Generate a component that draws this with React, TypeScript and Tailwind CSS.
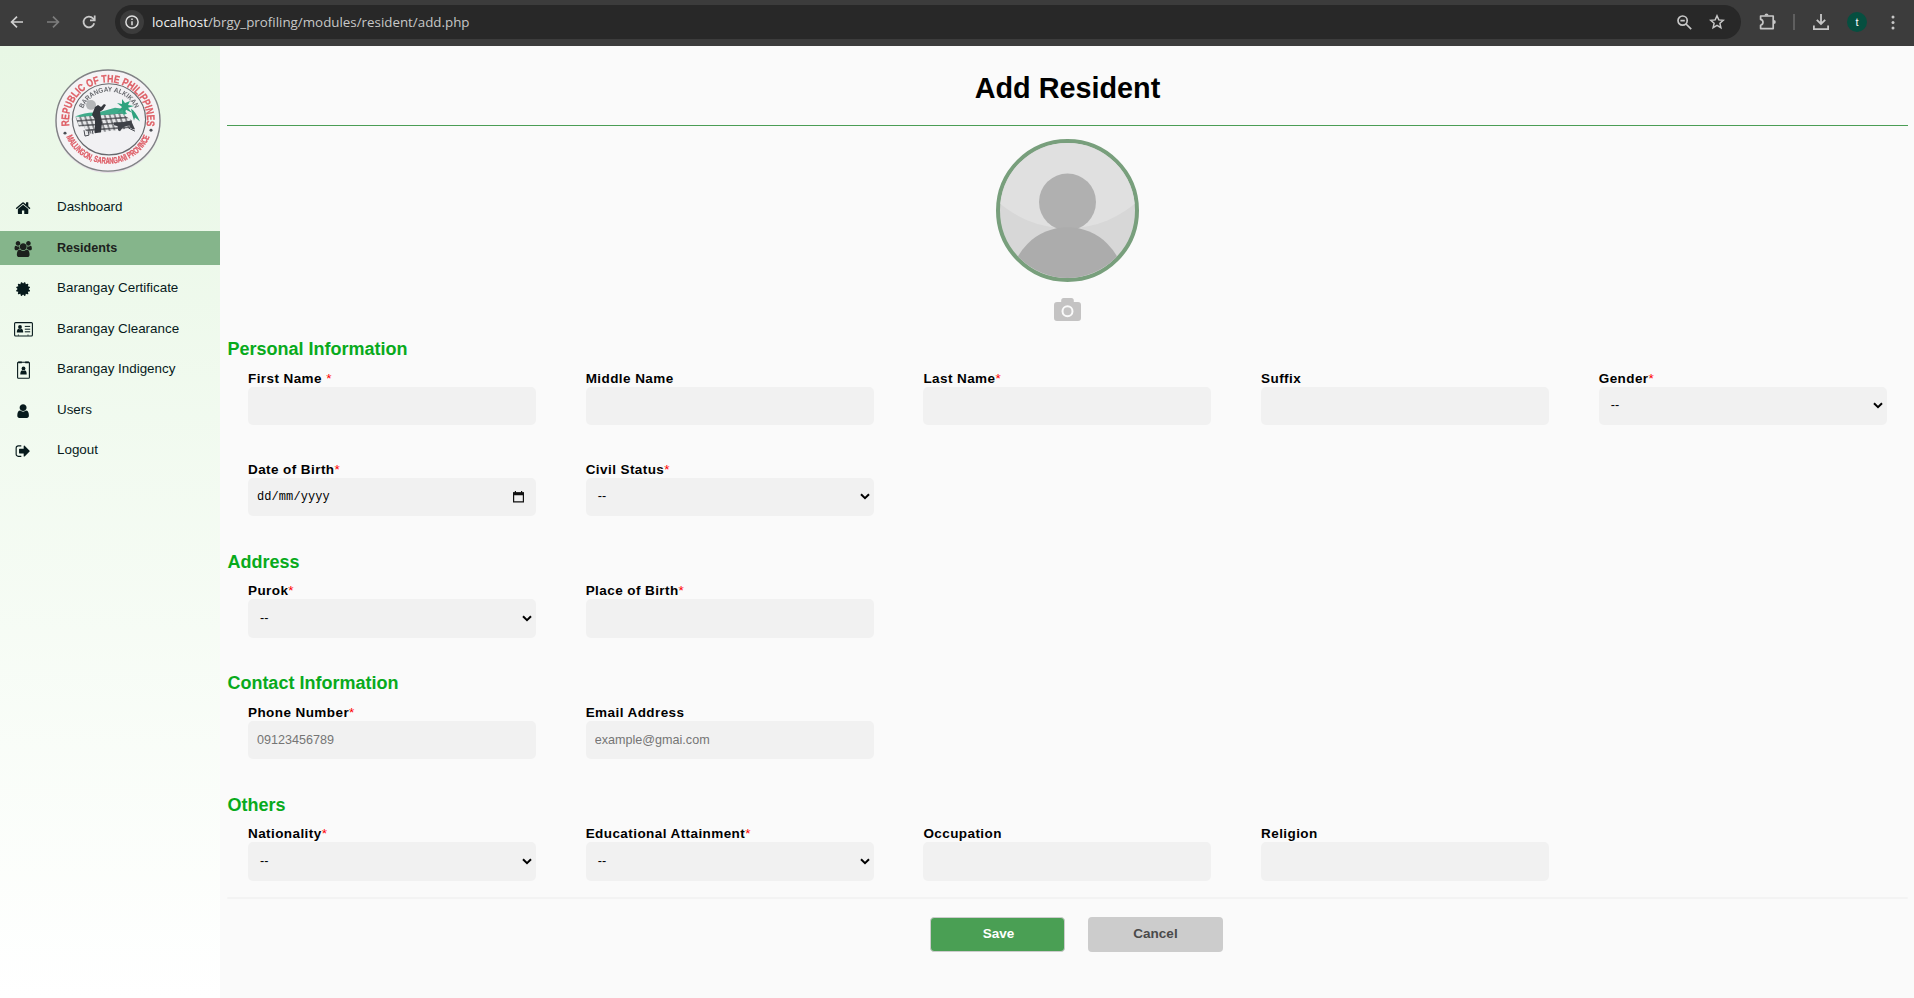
import React from "react";

type IconProps = { d: string; box?: string; w?: number };

const Glyph = ({ d, box = "0 0 1792 1792", w = 16.2 }: IconProps) => (
  <svg viewBox={box} width={w} height={16.2} fill="currentColor">
    <path d={d} />
  </svg>
);

const HOME =
  "M1472 992v480q0 26-19 45t-45 19h-384v-384h-256v384h-384q-26 0-45-19t-19-45v-480q0-1 .5-3t.5-3l575-474 575 474q1 2 1 6zm223-69l-62 74q-8 9-21 11h-3q-13 0-21-7l-692-577-692 577q-12 8-24 7-13-2-21-11l-62-74q-8-10-7-23.5t11-21.5l719-599q32-26 76-26t76 26l244 204v-195q0-14 9-23t23-9h192q14 0 23 9t9 23v408l219 182q10 8 11 21.5t-7 23.5z";
const USERS =
  "M529 896q-162 5-265 128h-134q-82 0-138-40.5t-56-118.5q0-353 124-353 6 0 43.5 21t97.5 42.5 119 21.5q67 0 133-23-5 37-5 66 0 139 81 256zm1071 637q0 120-73 189.5t-194 69.5h-874q-121 0-194-69.5t-73-189.5q0-53 3.5-103.5t14-109 26.5-108.5 43-97.5 62-81 85.5-53.5 111.5-20q10 0 43 21.5t73 48 107 48 135 21.5 135-21.5 107-48 73-48 43-21.5q61 0 111.5 20t85.5 53.5 62 81 43 97.5 26.5 108.5 14 109 3.5 103.5zm-1024-1277q0 106-75 181t-181 75-181-75-75-181 75-181 181-75 181 75 75 181zm704 384q0 159-112.5 271.5t-271.5 112.5-271.5-112.5-112.5-271.5 112.5-271.5 271.5-112.5 271.5 112.5 112.5 271.5zm576 225q0 78-56 118.5t-138 40.5h-134q-103-123-265-128 81-117 81-256 0-29-5-66 66 23 133 23 59 0 119-21.5t97.5-42.5 43.5-21q124 0 124 353zm-128-609q0 106-75 181t-181 75-181-75-75-181 75-181 181-75 181 75 75 181z";
const CERTIFICATE =
  "M1504 896l138 135q30 28 20 70-12 41-52 51l-188 48 53 186q12 41-19 70-29 31-70 19l-186-53-48 188q-10 40-51 52-12 2-19 2-31 0-51-22l-135-138-135 138q-28 30-70 20-41-11-51-52l-48-188-186 53q-41 12-70-19-31-29-19-70l53-186-188-48q-40-10-52-51-10-42 20-70l138-135-138-135q-30-28-20-70 12-41 52-51l188-48-53-186q-12-41 19-70 29-31 70-19l186 53 48-188q10-41 51-51 41-12 70 19l135 139 135-139q29-30 70-19 41 10 51 51l48 188 186-53q41-12 70 19 31 29 19 70l-53 186 188 48q40 10 52 51 10 42-20 70z";
const USER =
  "M1536 1399q0 109-62.5 187t-150.5 78h-854q-88 0-150.5-78t-62.5-187q0-85 8.5-160.5t31.5-152 58.5-131 94-89 134.5-34.5q131 128 313 128t313-128q76 0 134.5 34.5t94 89 58.5 131 31.5 152 8.5 160.5zm-256-887q0 159-112.5 271.5t-271.5 112.5-271.5-112.5-112.5-271.5 112.5-271.5 271.5-112.5 271.5 112.5 112.5 271.5z";
const SIGN_OUT =
  "M704 1440q0 4 1 20t.5 26.5-3 23.5-10 19.5-20.5 6.5h-320q-119 0-203.5-84.5t-84.5-203.5v-704q0-119 84.5-203.5t203.5-84.5h320q13 0 22.5 9.5t9.5 22.5q0 4 1 20t.5 26.5-3 23.5-10 19.5-20.5 6.5h-320q-66 0-113 47t-47 113v704q0 66 47 113t113 47h312l11.5 1 11.5 3 8 5.5 7 9 2 13.5zm928-544q0 26-19 45l-544 544q-19 19-45 19t-45-19-19-45v-288h-448q-26 0-45-19t-19-45v-384q0-26 19-45t45-19h448v-288q0-26 19-45t45-19 45 19l544 544q19 19 19 45z";

const AddressCard = () => (
  <svg viewBox="0 0 19 15" width="19" height="15" fill="none">
    <rect x=".6" y=".6" width="17.8" height="13.4" rx="1" stroke="currentColor" strokeWidth="1.1" />
    <circle cx="6" cy="5" r="1.9" fill="currentColor" />
    <path d="M2.8 10.6q0-3.6 1.9-3.9 1.3 1 2.6 0 1.9.3 1.9 3.9z" fill="currentColor" />
    <path d="M10.8 4.4h5.4M10.8 7.2h5.4M10.8 9.8h5.4" stroke="currentColor" strokeWidth="1" />
    <path d="M4.4 12.6v1M14 12.6v1" stroke="currentColor" strokeWidth="1" />
  </svg>
);

const Badge = () => (
  <svg viewBox="0 0 13 18" width="13" height="18" fill="none">
    <rect x=".6" y="1.2" width="11.8" height="16" rx=".8" stroke="currentColor" strokeWidth="1.1" />
    <path d="M1.2 1.4h3.6M8.2 1.4h3.6" stroke="currentColor" strokeWidth="1.8" />
    <circle cx="6.5" cy="7.4" r="1.9" fill="currentColor" />
    <path d="M3.3 13.6q0-4 1.9-4.4 1.3 1 2.6 0 1.9.4 1.9 4.4z" fill="currentColor" />
  </svg>
);

const NAV: { label: string; icon: React.ReactNode; active?: boolean }[] = [
  { label: "Dashboard", icon: <Glyph d={HOME} /> },
  { label: "Residents", icon: <Glyph d={USERS} box="-64 0 1984 1792" w={19} />, active: true },
  { label: "Barangay Certificate", icon: <Glyph d={CERTIFICATE} /> },
  { label: "Barangay Clearance", icon: <AddressCard /> },
  { label: "Barangay Indigency", icon: <Badge /> },
  { label: "Users", icon: <Glyph d={USER} /> },
  { label: "Logout", icon: <Glyph d={SIGN_OUT} /> },
];

const Seal = () => (
  <svg viewBox="0 0 108 108" width="108" height="105" preserveAspectRatio="none" className="blur-[0.5px]">
    <defs>
      <path id="ringTop" d="M15.9 62.1A39 39 0 1 1 92.1 62.1" />
      <path id="ringBottom" d="M11.2 67.4A45 45 0 0 0 96.8 67.4" />
      <path id="innerTop" d="M28.7 42.7A28 28 0 0 1 81.3 42.7" />
      <pattern id="panel" width="5" height="5" patternUnits="userSpaceOnUse" patternTransform="skewX(14) rotate(-4)">
        <rect width="5" height="5" fill="#3b3d42" />
        <rect x=".6" y=".6" width="3.9" height="3.8" fill="#e6e7e9" />
      </pattern>
    </defs>
    <circle cx="54" cy="55.5" r="52.6" fill="#e6e0e6" />
    <circle cx="54" cy="54" r="52" fill="#f5f3f5" stroke="#808285" strokeWidth="1.4" />
    <circle cx="55" cy="52.8" r="36.6" fill="#f1f1f3" stroke="#66686c" strokeWidth="1.2" />
    <circle cx="37" cy="38" r="5" fill="#b4b6b8" />
    <path d="M21 50q12-5 22-4l18-5 8 1 4 5-10 3-30 1z" fill="#3fab8a" />
    <path d="M68 40l-5-4 5 1 0-5 3 4 5-2-2 4 6 1-6 2 4 5-6-3-2 6-1-6-6 3zM77 42q4 2 9 13l-5-4-1 3-2-7z" fill="#2ea27e" />
    <path d="M21.5 50.7L68 46.7l10 7.3-1 8-44 6-3-8-5 .5z" fill="url(#panel)" />
    <path d="M60 56l7 0 10-2 4 9-3 0-3-4-6 2-3 4-2-1 0-4-4-1z" fill="#3f4248" />
    <path d="M41 40l3-2 3 2 3-3 2 1-3 5-3 2 1 7 1 4-1 10-6 1 0-14-3-5z" fill="#34373d" />
    <path d="M30 64l1 6 4-1-1-5M38 63l1 5M75 62l6 3" stroke="#44474d" fill="none" />
    <g fontFamily="Liberation Sans, Arial, sans-serif" textAnchor="middle">
      <text fontSize="11" fontWeight="700" fill="#de5f66" stroke="#de5f66" strokeWidth=".3">
        <textPath href="#ringTop" startOffset="50%" textLength="134" lengthAdjust="spacingAndGlyphs">
          REPUBLIC OF THE PHILIPPINES
        </textPath>
      </text>
      <text fontSize="9" fontWeight="700" fill="#de5a64" stroke="#de5a64" strokeWidth=".3">
        <textPath href="#ringBottom" startOffset="50%" textLength="106" lengthAdjust="spacingAndGlyphs">
          MALUNGON, SARANGANI PROVINCE
        </textPath>
      </text>
      <text fontSize="7" fontWeight="700" fill="#66686d">
        <textPath href="#innerTop" startOffset="50%" textLength="66" lengthAdjust="spacingAndGlyphs">
          BARANGAY ALKIKAN
        </textPath>
      </text>
    </g>
    <circle cx="11" cy="67" r="1.5" fill="#4c4f55" />
    <circle cx="97" cy="64" r="1.5" fill="#4c4f55" />
  </svg>
);

const Star = () => <span className="font-normal text-[#ff0000]">*</span>;

type FieldProps = {
  label: string;
  required?: boolean;
  kind?: "text" | "select" | "date";
  placeholder?: string;
};

const Field = ({ label, required, kind = "text", placeholder }: FieldProps) => (
  <div className="w-[288px]">
    <div className="h-4 text-[13.5px] leading-4 font-bold tracking-[0.42px] whitespace-pre text-black">
      {label}
      {required && <Star />}
    </div>
    {kind === "text" && (
      <input
        placeholder={placeholder}
        className="block h-[38.6px] w-full rounded-[5px] bg-[#f1f1f1] px-[9px] pb-px text-[12.6px] outline-none placeholder:text-[#757575]"
      />
    )}
    {kind === "select" && (
      <div className="flex h-[38.6px] items-center justify-between rounded-[5px] bg-[#f1f1f1] pr-[4px] pb-px pl-[12px] text-[12.6px] text-black">
        <span>--</span>
        <svg width="10" height="7" viewBox="0 0 10 7" fill="none" stroke="#000" strokeWidth="2">
          <path d="M1 1.2l4 3.9 4-3.9" />
        </svg>
      </div>
    )}
    {kind === "date" && (
      <div className="flex h-[38.6px] items-center justify-between rounded-[5px] bg-[#f1f1f1] pr-[12px] pl-[9px] text-black">
        <span className="font-['Liberation_Mono',monospace] text-[12px] tracking-[0.08px]">dd/mm/yyyy</span>
        <svg width="11" height="12" viewBox="0 0 11 12" fill="none">
          <path d="M.6 2.2h9.8v8.7H.6z" stroke="#111" strokeWidth="1.2" />
          <path d="M0 1.2h11v3H0zM1.8 0h1.2v2H1.8zM8 0h1.2v2H8z" fill="#111" />
        </svg>
      </div>
    )}
  </div>
);

const Section = ({ title, children }: { title: string; children: React.ReactNode }) => (
  <section>
    <h2 className="mb-[9.5px] h-6 pl-[0.4px] text-[18px] leading-6 font-bold text-[#08aa1c]">{title}</h2>
    <div className="grid grid-cols-[repeat(5,337.7px)] gap-y-[36.2px] pl-[21px]">{children}</div>
  </section>
);

const Toolbar = () => (
  <header className="flex h-[46px] shrink-0 items-center bg-[#3c3c3c] pb-[2px] text-[#c7c7c7]">
    <div className="flex w-[115px] items-center pl-[10px]">
      <svg width="14" height="14" viewBox="0 0 14 14" fill="none" stroke="#d0d0d0" strokeWidth="1.7">
        <path d="M13 7H2M7 1.6L1.6 7 7 12.4" />
      </svg>
      <svg className="ml-[22px]" width="14" height="14" viewBox="0 0 14 14" fill="none" stroke="#7d7d7d" strokeWidth="1.7">
        <path d="M1 7h11M7 1.6L12.4 7 7 12.4" />
      </svg>
      <svg className="ml-[22px]" width="14" height="14" viewBox="0 0 14 14" fill="none" stroke="#c9c9c9" strokeWidth="1.8">
        <path d="M12.2 8.3A5.4 5.4 0 1 1 11 3.4L12.6 5" />
        <path d="M12.7.6v4.8H8" />
      </svg>
    </div>
    <div className="flex h-[34px] w-[1626px] items-center rounded-full bg-[#282828] pl-[5px]">
      <div className="flex size-6 items-center justify-center rounded-full bg-[#3c3c3c]">
        <svg width="14" height="14" viewBox="0 0 14 14" fill="none" stroke="#dedede" strokeWidth="1.5">
          <circle cx="7" cy="7" r="6.1" />
          <path d="M7 6.2v4M7 3.5v1.5" />
        </svg>
      </div>
      <span className="ml-2 font-['Open_Sans','Noto_Sans',sans-serif] text-[13.35px] whitespace-nowrap text-[#c7c7c7]">
        <span className="text-[#f0f0f0]">localhost</span>/brgy_profiling/modules/resident/add.php
      </span>
      <div className="ml-auto flex items-center pr-[16px]">
        <svg width="15" height="15" viewBox="0 0 15 15" fill="none" stroke="#c7c7c7" strokeWidth="1.7">
          <circle cx="5.6" cy="5.6" r="4.6" />
          <path d="M9 9l5.2 5.2M3.4 5.6h4.4" />
        </svg>
        <svg className="ml-[17px]" width="16" height="16" viewBox="0 0 16 16" fill="none" stroke="#c7c7c7" strokeWidth="1.5">
          <path d="M8 1.8l1.8 4.1 4.5.4-3.4 3 1 4.4L8 11.4l-3.9 2.3 1-4.4-3.4-3 4.5-.4z" />
        </svg>
      </div>
    </div>
    <svg className="ml-[18px]" width="18" height="18" viewBox="0 0 18 18" fill="none" stroke="#c7c7c7" strokeWidth="1.7" strokeLinejoin="round">
      <path d="M1.6 3h12.6v12.6H1.6v-3.4q2.4-.6 2.4-2.9T1.6 6.4z" />
      <path d="M5.5 2.6a2 2 0 0 1 4 0zM14.8 7a2 2 0 0 1 0 4z" fill="#c7c7c7" stroke="none" />
    </svg>
    <div className="ml-[16px] h-4 w-0.5 bg-[#5f5f5f]" />
    <svg className="ml-[18px]" width="16" height="16" viewBox="0 0 16 16" fill="none" stroke="#c7c7c7" strokeWidth="1.8">
      <path d="M8 0v9.8M3.8 5.8L8 10l4.2-4.2M.9 11.5v3.6h14.2v-3.6" />
    </svg>
    <div className="ml-[18px] flex size-5 items-center justify-center rounded-full bg-[#064f40] text-[11px] text-white">t</div>
    <svg className="ml-[24px]" width="4" height="15" viewBox="0 0 4 15" fill="#c7c7c7">
      <circle cx="2" cy="2" r="1.5" />
      <circle cx="2" cy="7.5" r="1.5" />
      <circle cx="2" cy="13" r="1.5" />
    </svg>
  </header>
);

export default function App() {
  return (
    <div className="flex h-[998px] w-[1914px] flex-col overflow-hidden bg-[#fafafa] font-['Liberation_Sans',Arial,sans-serif]">
      <Toolbar />
      <div className="flex flex-1">
        <aside className="w-[220px] shrink-0 bg-linear-to-b from-[#e8f7e5] to-white pt-[22px]">
          <div className="flex h-[122.6px] justify-center pr-[5px]">
            <Seal />
          </div>
          <nav className="flex flex-col gap-[6.5px]">
            {NAV.map((item) => (
              <a
                key={item.label}
                className={
                  item.active
                    ? "flex h-[34px] items-center bg-[#85b58b] text-[12.6px] font-bold text-[#1c211d]"
                    : "flex h-[34px] items-center text-[13.4px] text-[#071a1c]"
                }
              >
                <span className="flex w-[47px] justify-center pt-px">{item.icon}</span>
                <span className={item.active ? "pt-px pl-[10px]" : "pb-px pl-[10px]"}>{item.label}</span>
              </a>
            ))}
          </nav>
        </aside>
        <main className="flex min-w-0 flex-1 flex-col pr-[6px] pl-[7px]">
          <h1 className="flex h-[80px] items-center justify-center border-b border-[#4a9d54] pt-[5px] text-[28.8px] leading-[33px] font-bold text-black">
            Add Resident
          </h1>
          <div className="mt-[13px] flex h-[198.4px] flex-col items-center">
            <div className="size-[143px] overflow-hidden rounded-full border-4 border-[#789f7c] bg-[#d7d7d7]">
              <svg width="135" height="135" viewBox="0 0 135 135">
                <circle cx="67.5" cy="-18.7" r="104" fill="#e0e0e0" />
                <circle cx="67.5" cy="59" r="28.5" fill="#b0b0b0" />
                <circle cx="67.5" cy="141" r="56.7" fill="#acacac" />
              </svg>
            </div>
            <svg className="mt-4" width="27" height="23" viewBox="0 0 27 23">
              <path
                d="M7.2 4V2.5Q7.2 0 9.7 0h7.6q2.5 0 2.5 2.5V4H24q3 0 3 3v13q0 3-3 3H3q-3 0-3-3V7q0-3 3-3z"
                fill="#c4c3c3"
              />
              <circle cx="13.5" cy="13.3" r="5" fill="none" stroke="#fafafa" strokeWidth="2" />
            </svg>
          </div>
          <div className="flex flex-col gap-[33.5px]">
            <Section title="Personal Information">
              <Field label="First Name " required />
              <Field label="Middle Name" />
              <Field label="Last Name" required />
              <Field label="Suffix" />
              <Field label="Gender" required kind="select" />
              <Field label="Date of Birth" required kind="date" />
              <Field label="Civil Status" required kind="select" />
            </Section>
            <Section title="Address">
              <Field label="Purok" required kind="select" />
              <Field label="Place of Birth" required />
            </Section>
            <Section title="Contact Information">
              <Field label="Phone Number" required placeholder="09123456789" />
              <Field label="Email Address" placeholder="example@gmai.com" />
            </Section>
            <Section title="Others">
              <Field label="Nationality" required kind="select" />
              <Field label="Educational Attainment" required kind="select" />
              <Field label="Occupation" />
              <Field label="Religion" />
            </Section>
          </div>
          <div className="mt-4 h-0.5 rounded-full bg-[#f3f3f3]" />
          <div className="mt-[18px] flex gap-[23px] pl-[703px]">
            <button className="h-[35px] w-[135px] rounded-[4px] border border-[#cccccc] bg-[#4a9f54] pl-[2px] text-[13.5px] font-bold text-white">
              Save
            </button>
            <button className="h-[35px] w-[135px] rounded-[4px] bg-[#cccccc] text-[13.5px] font-bold text-[#4a4a4a]">
              Cancel
            </button>
          </div>
        </main>
      </div>
    </div>
  );
}
